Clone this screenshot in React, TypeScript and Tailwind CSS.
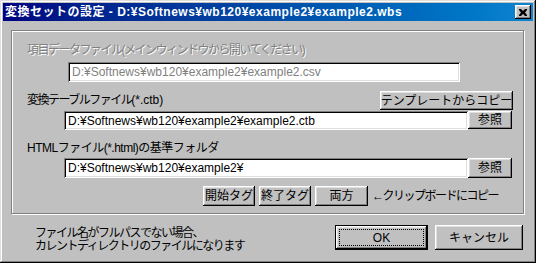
import React from 'react';

const font = { fontFamily: '"Liberation Sans", "Noto Sans CJK JP", sans-serif' };

const raised =
  'bg-[#c0c0c0] shadow-[inset_-1px_-1px_#000,inset_1px_1px_#fff,inset_-2px_-2px_#808080,inset_2px_2px_#dfdfdf]';
const sunken =
  'bg-white shadow-[inset_1px_1px_#808080,inset_-1px_-1px_#fff,inset_2px_2px_#000,inset_-2px_-2px_#dfdfdf]';

// kana in the original dialog font are narrow, so tighten japanese runs
function J({ children }: { children: React.ReactNode }) {
  return <span className="tracking-[-1.5px]">{children}</span>;
}

function Btn({ w, h, children, className = '' }: { w: string; h: string; children: React.ReactNode; className?: string }) {
  return (
    <div className={`${raised} ${w} ${h} flex items-center justify-center text-[12px] text-black shrink-0 ${className}`}>
      {children}
    </div>
  );
}

function Field({ w, value, disabled }: { w: string; value: string; disabled?: boolean }) {
  return (
    <div className={`${sunken} ${w} h-full flex items-center pl-[4px] text-[12px] ${disabled ? 'text-[#808080]' : 'text-black'}`}>
      {value}
    </div>
  );
}

export default function App() {
  return (
    <div style={font} className="w-[536px] h-[263px] bg-[#c0c0c0] p-[3px] shadow-[inset_-1px_-1px_#000,inset_1px_1px_#dfdfdf,inset_-2px_-2px_#808080,inset_2px_2px_#fff] flex flex-col select-none">
      {/* title bar */}
      <div className="h-[18px] shrink-0 flex items-center bg-gradient-to-r from-[#000080] to-[#1084d0] pl-[2px] pr-[2px]">
        <span className="text-white font-bold text-[12px] leading-none tracking-[0.5px]">
          変換セットの設定 - D:¥Softnews¥wb120¥example2¥example2.wbs
        </span>
        <div className={`${raised} ml-auto w-[16px] h-[14px] flex items-center justify-center`}>
          <svg width="8" height="7" viewBox="0 0 8 7">
            <path d="M0 0h2l2 2 2-2h2v1L6 3.5 8 6v1H6L4 5 2 7H0V6l2-2.5L0 1z" fill="#000" />
          </svg>
        </div>
      </div>

      {/* group box */}
      <div className="ml-[8px] mt-[9px] w-[513px] h-[184px] shrink-0 border border-[#808080] shadow-[1px_1px_0_#fff,inset_1px_1px_0_#fff] flex flex-col">
        <div className="mt-[12px] pl-[15px] h-[14px] leading-[14px] text-[12px] text-[#808080] [text-shadow:1px_1px_0_#fff]">
          <J>項目データファイル(メインウィンドウから開いてください)</J>
        </div>
        <div className="mt-[5px] ml-[56px] h-[20px]">
          <Field w="w-[392px]" value="D:¥Softnews¥wb120¥example2¥example2.csv" disabled />
        </div>

        <div className="mt-[9px] h-[19px] flex items-start">
          <span className="pl-[15px] mt-[2px] text-[12px] leading-[14px]">
            <J>変換テーブルファイル</J>(*.ctb)
          </span>
          <Btn w="w-[133px]" h="h-[19px]" className="ml-auto mr-[10px]">テンプレートからコピー</Btn>
        </div>
        <div className="mt-[1px] ml-[52px] h-[19px] flex">
          <Field w="w-[404px]" value="D:¥Softnews¥wb120¥example2¥example2.ctb" />
          <Btn w="w-[44px]" h="h-[18px]">参照</Btn>
        </div>

        <div className="mt-[11px] pl-[15px] h-[14px] leading-[14px] text-[12px] tracking-[-0.5px]">
          HTMLファイル(*.html)の基準フォルダ
        </div>
        <div className="mt-[3px] ml-[52px] h-[20px] flex">
          <Field w="w-[404px]" value="D:¥Softnews¥wb120¥example2¥" />
          <Btn w="w-[44px]" h="h-[20px]">参照</Btn>
        </div>

        <div className="mt-[8px] ml-[191px] h-[20px] flex items-center">
          <Btn w="w-[52px]" h="h-[20px]">開始タグ</Btn>
          <Btn w="w-[52px]" h="h-[20px]" className="ml-[4px]">終了タグ</Btn>
          <Btn w="w-[53px]" h="h-[20px]" className="ml-[4px]">両方</Btn>
          <span className="ml-[4px] text-[12px]">
            <J>←クリップボードにコピー</J>
          </span>
        </div>
      </div>

      {/* bottom */}
      <div className="mt-[11px] flex items-start">
        <div className="ml-[32px] mt-[2px] text-[12px] leading-[13px]">
          <div><J>ファイル名がフルパスでない場合、</J></div>
          <div><J>カレントディレクトリのファイルになります</J></div>
        </div>
        <div className="ml-auto mr-[10px] flex">
          <div className="w-[93px] h-[25px] border border-black">
            <div className={`${raised} w-full h-full p-[3px]`}>
              <div className="w-full h-full border border-dotted border-black flex items-center justify-center text-[12px]">
                OK
              </div>
            </div>
          </div>
          <Btn w="w-[88px]" h="h-[25px]" className="ml-[7px]">キャンセル</Btn>
        </div>
      </div>
    </div>
  );
}
